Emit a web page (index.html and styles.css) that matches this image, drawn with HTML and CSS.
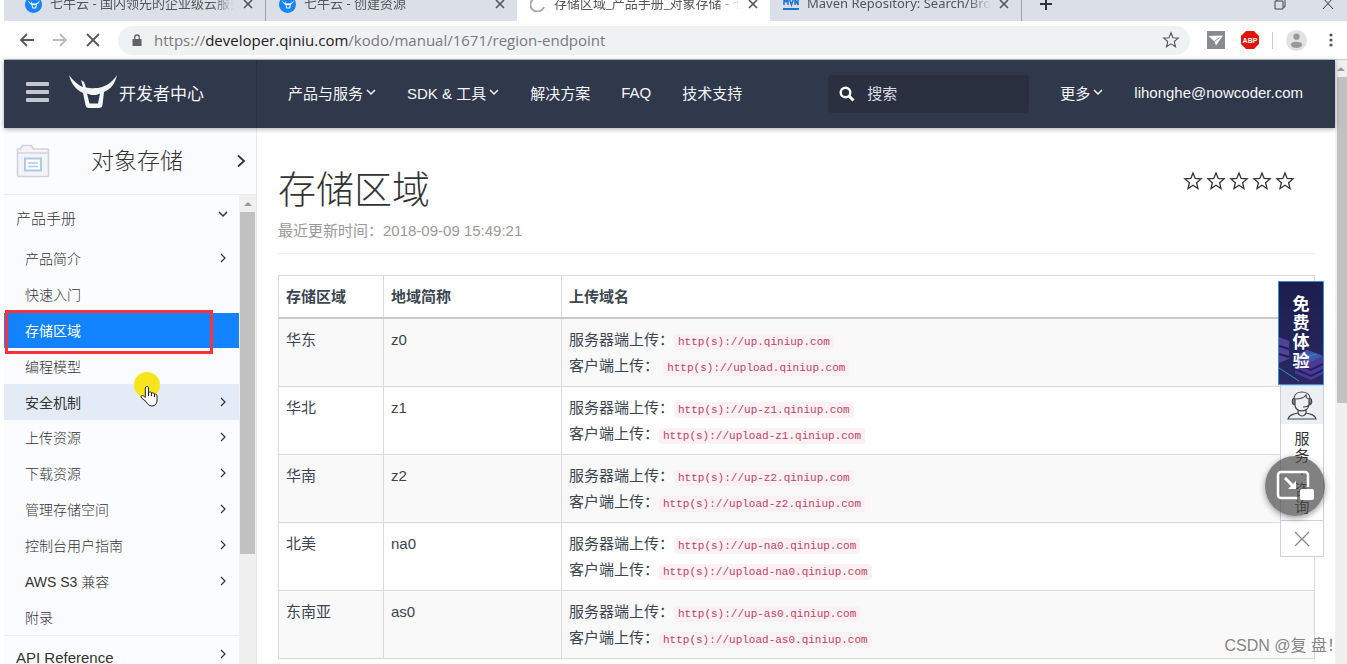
FILE: index.html
```html
<!DOCTYPE html>
<html lang="zh-CN">
<head>
<meta charset="utf-8">
<title>存储区域_产品手册_对象存储 - 七牛开发者中心</title>
<link rel="stylesheet" href="styles.css">
</head>
<body>
<svg class="defs" aria-hidden="true">
  <symbol id="bull" viewBox="0 0 48 34"><path fill="currentColor" fill-rule="evenodd" d="M0 0C5 7 11 11 14 12L12 5L15 7L17 12.500C21 13.500 29 13.500 33 12C40 9.500 44 6 48 0C46 9 42 14 35 17L33.500 30Q33 33 30 33H20Q17 33 16.500 30L14 18C6 14 2 8 0 0ZM18 18.500L20.500 28.500H29L31 18.500L28.500 19.500Q27.500 20 25 20Q22 20 21 19.500Z"/></symbol>
  <symbol id="down" viewBox="0 0 10 10"><path d="M1 3l4 4 4-4" fill="none" stroke="currentColor" stroke-width="1.500"/></symbol>
  <symbol id="right" viewBox="0 0 10 10"><path d="M3 1l4 4-4 4" fill="none" stroke="currentColor" stroke-width="1.200"/></symbol>
  <symbol id="close" viewBox="0 0 10 10"><path d="M1 1l8 8M9 1L1 9" fill="none" stroke="currentColor" stroke-width="1.600"/></symbol>
  <symbol id="star" viewBox="0 0 20 20"><path d="M10 2l2.200 5.500 5.900.4-4.500 3.800 1.400 5.800L10 14.300 5 17.500l1.400-5.800L1.900 7.900l5.900-.4z" fill="none" stroke="currentColor" stroke-width="1.300"/></symbol>
</svg>

<div class="tabs">
  <div class="tab">
    <span class="favicon"><svg><use href="#bull"/></svg></span>
    <span class="tab-title">七牛云 - 国内领先的企业级云服务</span>
    <button class="tab-close" aria-label="关闭标签页"><svg><use href="#close"/></svg></button>
  </div>
  <div class="tab divided">
    <span class="favicon"><svg><use href="#bull"/></svg></span>
    <span class="tab-title">七牛云 - 创建资源</span>
    <button class="tab-close" aria-label="关闭标签页"><svg><use href="#close"/></svg></button>
  </div>
  <div class="tab active-tab">
    <svg class="spinner" viewBox="0 0 16 16"><path d="M5 2a7 7 0 1 0 9 9" fill="none" stroke="#aaa" stroke-width="2"/></svg>
    <span class="tab-title">存储区域_产品手册_对象存储 - 七</span>
    <button class="tab-close" aria-label="关闭标签页"><svg><use href="#close"/></svg></button>
  </div>
  <div class="tab last-tab">
    <svg class="mvn" viewBox="0 0 16 16"><path d="M1 9V3l2 3 2-3v6M6.500 3l2 6 2-6M12 9V3l3 6V3" fill="none" stroke="#1b74d8" stroke-width="1.500"/><path fill="#1b74d8" d="M0 12h16v2H0z"/></svg>
    <span class="tab-title">Maven Repository: Search/Bro</span>
    <button class="tab-close" aria-label="关闭标签页"><svg><use href="#close"/></svg></button>
  </div>
  <button class="new-tab" aria-label="新建标签页"><svg viewBox="0 0 14 14"><path d="M7 1v12M1 7h12" stroke="#333" stroke-width="2"/></svg></button>
  <div class="window-buttons">
    <button aria-label="还原"><svg viewBox="0 0 12 12"><path d="M1 3h8v8H1zM3 3V1h8v8H9" fill="none" stroke="#444"/></svg></button>
    <button aria-label="关闭"><svg viewBox="0 0 12 12"><path d="M1 0l10 11M11 0L1 11" fill="none" stroke="#333"/></svg></button>
  </div>
</div>

<div class="toolbar">
  <button aria-label="后退"><svg viewBox="0 0 16 16"><path d="M15 8H2M8 2L2 8l6 6" fill="none" stroke="#55585c" stroke-width="1.800"/></svg></button>
  <button aria-label="前进"><svg viewBox="0 0 16 16"><path d="M1 8h13M8 2l6 6-6 6" fill="none" stroke="#b9bbbe" stroke-width="1.800"/></svg></button>
  <button aria-label="停止"><svg viewBox="0 0 16 16"><path d="M2 2l12 12M14 2L2 14" fill="none" stroke="#55585c" stroke-width="1.800"/></svg></button>
  <div class="address">
    <svg class="lock" viewBox="0 0 10 12"><path d="M.5 5h9v7h-9z" fill="#5f6368"/><path d="M2.700 5V3.300a2.300 2.300 0 0 1 4.600 0V5" fill="none" stroke="#5f6368" stroke-width="1.300"/></svg>
    <span class="url">https://<b>developer.qiniu.com</b>/kodo/manual/1671/region-endpoint</span>
    <button aria-label="收藏"><svg><use href="#star"/></svg></button>
  </div>
  <div class="extensions">
    <svg class="ext" viewBox="0 0 18 18"><path fill="#858b8f" d="M0 0h18v18H0z"/><path fill="#fff" d="M1.500 5l14.500-.5-7 10-1.500-4z"/><path stroke="#858b8f" d="M7.500 10.500l5-4"/></svg>
    <svg class="ext" viewBox="0 0 18 18"><path fill="#e01405" d="M5 0h8l5 5v8l-5 5H5l-5-5V5z"/><text x="9" y="12" text-anchor="middle" class="abp">ABP</text></svg>
    <span class="ext-divider"></span>
    <svg class="person" viewBox="0 0 22 22"><circle cx="11" cy="11" r="11" fill="#e2e2e2"/><circle cx="11" cy="7" r="3.300" fill="#9a9a9a"/><ellipse cx="11" cy="15.500" rx="6" ry="3.300" fill="#9a9a9a"/></svg>
    <button class="dots" aria-label="菜单"><svg viewBox="0 0 4 16"><g fill="#555"><circle cx="2" cy="3" r="1.600"/><circle cx="2" cy="8" r="1.600"/><circle cx="2" cy="13" r="1.600"/></g></svg></button>
  </div>
</div>

<div class="viewport">
  <div class="page">
    <header class="site-header">
      <div class="brand">
        <button class="burger" aria-label="菜单"><span></span><span></span><span></span></button>
        <a href="#" class="logo"><svg><use href="#bull"/></svg>开发者中心</a>
      </div>
      <nav class="main-nav">
        <a href="#">产品与服务<svg><use href="#down"/></svg></a>
        <a href="#">SDK &amp; 工具<svg><use href="#down"/></svg></a>
        <a href="#">解决方案</a>
        <a href="#">FAQ</a>
        <a href="#">技术支持</a>
      </nav>
      <label class="search">
        <svg viewBox="0 0 16 16"><circle cx="6.500" cy="6.500" r="4.800" fill="none" stroke="#fff" stroke-width="2.400"/><path d="M10 10l4.500 4.500" stroke="#fff" stroke-width="3"/></svg>
        <input type="text" placeholder="搜索" aria-label="搜索">
      </label>
      <nav class="main-nav account">
        <a href="#">更多<svg><use href="#down"/></svg></a>
        <a href="#">lihonghe@nowcoder.com</a>
      </nav>
    </header>

    <div class="columns">
      <aside class="sidebar">
        <a href="#" class="product">
          <svg class="folder" viewBox="0 0 34 34"><path d="M1.500 8V5h3l2-3.500h9l2 3.500h14a1 1 0 0 1 1 1v25a1.500 1.500 0 0 1-1.500 1.500H3A1.500 1.500 0 0 1 1.500 31zM1.500 9h31" fill="#f4f4f8" stroke="#d2d2da" stroke-width="1.600"/><path d="M9 14.500h16v12H9z" fill="#fff" stroke="#adc9e6" stroke-width="2"/><path d="M12 19h10M12 22.500h10" stroke="#adc9e6" stroke-width="1.600"/></svg>
          <span class="product-name">对象存储</span>
          <svg class="product-arrow" viewBox="0 0 10 14"><path d="M2 1.500L8 7l-6 5.500" fill="none" stroke="#333" stroke-width="1.800"/></svg>
        </a>
        <div class="menu-row">
          <nav class="menu">
            <a href="#" class="group">产品手册<svg><use href="#down"/></svg></a>
            <div class="items">
              <a href="#">产品简介<svg><use href="#right"/></svg></a>
              <a href="#">快速入门</a>
              <a href="#" class="current">存储区域<span class="highlight"></span></a>
              <a href="#">编程模型</a>
              <a href="#" class="hovered">安全机制<svg><use href="#right"/></svg>
                <span class="pointer"><svg viewBox="0 0 28 36"><circle cx="13" cy="13" r="13" fill="#f7e51b"/><path d="M12.500 14.500c1.300-.4 2 .3 2 1.500v5l1-1c1.500-.2 2 .3 2.300 1 1.500-.4 2.300.1 2.600 1 1.600-.2 2.600.5 2.600 2v5c0 2.500-2 5-5 5s-4.500-2-6-4.500L7.500 26c-1-1.500-.3-2.500.8-2.500 1 0 2 1 3 2V16c0-.8.500-1.300 1.200-1.500z" fill="#fff" stroke="#222"/><path d="M14.500 20v4M17.500 21v3M20.500 22v3" stroke="#222"/></svg></span></a>
              <a href="#">上传资源<svg><use href="#right"/></svg></a>
              <a href="#">下载资源<svg><use href="#right"/></svg></a>
              <a href="#">管理存储空间<svg><use href="#right"/></svg></a>
              <a href="#">控制台用户指南<svg><use href="#right"/></svg></a>
              <a href="#">AWS S3 兼容<svg><use href="#right"/></svg></a>
              <a href="#">附录</a>
            </div>
            <a href="#" class="group ruled">API Reference<svg><use href="#right"/></svg></a>
          </nav>
          <div class="scrollbar"><span class="scroll-up"></span><span class="thumb side-thumb"></span></div>
        </div>
      </aside>

      <main class="content">
        <div class="title-row">
          <div>
            <h1>存储区域</h1>
            <p class="updated">最近更新时间：2018-09-09 15:49:21</p>
          </div>
          <div class="stars">
            <button aria-label="1 星"><svg><use href="#star"/></svg></button>
            <button aria-label="2 星"><svg><use href="#star"/></svg></button>
            <button aria-label="3 星"><svg><use href="#star"/></svg></button>
            <button aria-label="4 星"><svg><use href="#star"/></svg></button>
            <button aria-label="5 星"><svg><use href="#star"/></svg></button>
          </div>
        </div>
        <table class="regions">
          <thead><tr><th class="col-region">存储区域</th><th class="col-code">地域简称</th><th>上传域名</th></tr></thead>
          <tbody>
            <tr><td>华东</td><td>z0</td><td>服务器端上传：<code>http(s)://up.qiniup.com</code><br>客户端上传：&nbsp;<code>http(s)://upload.qiniup.com</code></td></tr>
            <tr><td>华北</td><td>z1</td><td>服务器端上传：<code>http(s)://up-z1.qiniup.com</code><br>客户端上传：<code>http(s)://upload-z1.qiniup.com</code></td></tr>
            <tr><td>华南</td><td>z2</td><td>服务器端上传：<code>http(s)://up-z2.qiniup.com</code><br>客户端上传：<code>http(s)://upload-z2.qiniup.com</code></td></tr>
            <tr><td>北美</td><td>na0</td><td>服务器端上传：<code>http(s)://up-na0.qiniup.com</code><br>客户端上传：<code>http(s)://upload-na0.qiniup.com</code></td></tr>
            <tr><td>东南亚</td><td>as0</td><td>服务器端上传：<code>http(s)://up-as0.qiniup.com</code><br>客户端上传：<code>http(s)://upload-as0.qiniup.com</code></td></tr>
          </tbody>
        </table>
      </main>
    </div>

    <div class="float">
      <a href="#" class="trial">
        <svg class="trial-art" viewBox="0 0 44 102" preserveAspectRatio="xMidYMax slice"><path d="M0 55l10 4v18L0 81z" fill="#514398"/><path d="M0 64l10 3M0 72l10 3" stroke="#211d58" stroke-width="2"/><path d="M16 74l12-6 16 6v18l-12 6-16-7z" fill="#4a3c96"/><path d="M16 74l16 6 12-6-16-6z" fill="#3f58a8"/><path d="M16 81l16 7 12-6M16 87l16 7 12-6" fill="none" stroke="#241f62" stroke-width="2"/><path d="M0 86l20 13M26 75l12-3" stroke="#2f90b8"/></svg>
        <span>免费体验</span>
      </a>
      <div class="service">
        <svg class="agent" viewBox="0 0 30 30"><g fill="none" stroke="#444" stroke-width="1.200"><path d="M8 15C4 14 5 9 7 8 8 0 22 0 23 8c2 1 3 6-1 7M8 15V9c5 0 9-1 11-4 0 3 2 4 3 4v5c0 9-14 9-14 1zM22 14c0 3-3 3-6 3M11 20v3c-5 1-9 2-10 6h28c-1-4-5-5-10-6v-3M11 23c2 4 6 4 8 0"/><path d="M7 8v7M23 8v7"/></g></svg>
        <a href="#" class="service-text">服务<span>·</span>咨询</a>
        <button aria-label="关闭"><svg viewBox="0 0 16 16"><path d="M1 1l14 14M15 1L1 15" stroke="#888" stroke-width="1.200"/></svg></button>
      </div>
      <button class="pip" aria-label="画中画"><svg viewBox="0 0 38 32"><path d="M21 28H5a3 3 0 0 1-3-3V5a3 3 0 0 1 3-3h24a3 3 0 0 1 3 3v12" fill="none" stroke="#fff" stroke-width="2.500"/><path d="M9 8l9 9" stroke="#fff" stroke-width="3"/><path d="M20 11v8h-8z" fill="#fff"/><rect x="24" y="19" width="14" height="11" rx="2" fill="#fff"/></svg></button>
    </div>
  </div>
  <div class="scrollbar window-scroll"><span class="scroll-up"></span><span class="thumb main-thumb"></span></div>
</div>
<div class="watermark">CSDN @复 盘！</div>
</body>
</html>
```
FILE: styles.css
```css
* { box-sizing: border-box; }
body {
  margin: 0;
  padding-left: 4px;
  height: 100vh;
  display: flex;
  flex-direction: column;
  overflow: hidden;
  position: relative;
  background: #fff;
  color: #333;
  font: 15px "Liberation Sans", "Noto Sans CJK SC", sans-serif;
}
a { color: inherit; text-decoration: none; }
button { padding: 0; border: 0; background: none; color: inherit; font: inherit; display: grid; place-items: center; }
svg { display: block; flex: none; }
.defs { position: absolute; width: 0; height: 0; }

/* Browser tabs */
.tabs {
  height: 21px;
  flex: none;
  display: flex;
  align-items: flex-end;
  overflow: hidden;
  background: #dbdfe8;
  font: 13px "Noto Sans", "Noto Sans CJK SC", sans-serif;
  color: #555;
}
.tab {
  width: 252px;
  height: 34px;
  padding: 0 12px 0 13px;
  display: flex;
  align-items: center;
  gap: 8px;
}
.tab:first-child { width: 262px; padding-left: 21px; border-right: 1px solid #9da1aa; }
.divided { width: 251px; border-bottom-right-radius: 8px; }
.active-tab { width: 253px; background: #fff; }
.last-tab { border-right: 1px solid #9da1aa; }
.tab-title {
  flex: 1;
  overflow: hidden;
  white-space: nowrap;
  line-height: 20px;
  padding-bottom: 2px;
  mask-image: linear-gradient(to right, #000 88%, transparent);
}
.tab-close svg { width: 10px; height: 10px; }
.favicon {
  width: 17px;
  height: 17px;
  border-radius: 50%;
  background: #1684fc;
  color: #fff;
  display: grid;
  place-items: center;
}
.favicon svg { width: 12px; height: 9px; }
.spinner { width: 16px; height: 16px; }
.mvn { width: 16px; height: 16px; }
.new-tab { height: 34px; width: 48px; }
.new-tab svg { width: 14px; height: 14px; }
.window-buttons { height: 34px; margin-left: auto; padding-right: 13px; display: flex; align-items: center; gap: 36px; }
.window-buttons svg { width: 12px; height: 12px; }

/* Address bar */
.toolbar { height: 38px; flex: none; display: flex; align-items: center; padding: 0 11px 0 15px; gap: 17px; }
.toolbar > button svg { width: 16px; height: 16px; }
.address {
  flex: 1;
  height: 29px;
  border-radius: 15px;
  background: #f0f1f3;
  display: flex;
  align-items: center;
  padding: 0 10px 0 14px;
  gap: 12px;
}
.lock { width: 10px; height: 12px; }
.url { flex: 1; font: 15px "Open Sans", "Noto Sans", sans-serif; color: #777b80; }
.url b { font-weight: 400; color: #222; }
.address svg:not(.lock) { width: 18px; height: 18px; color: #55585c; }
.extensions { display: flex; align-items: center; gap: 13px; }
.ext { width: 18px; height: 18px; }
.ext + .ext { margin-left: 3px; }
.abp { font: bold 7px "Liberation Sans", sans-serif; fill: #fff; }
.ext-divider { width: 1px; height: 17px; background: #ccc; }
.person { width: 21px; height: 21px; }
.dots { width: 16px; justify-items: end; padding-right: 3px; }
.dots svg { width: 4px; height: 16px; }

/* Page frame */
.viewport { flex: 1; min-height: 0; display: flex; border-top: 1px solid #c5c7cb; }
.page { flex: 1; min-width: 0; display: flex; flex-direction: column; position: relative; }
.scrollbar { background: #f0f0f0; display: flex; flex-direction: column; align-items: center; }
.window-scroll { width: 12px; }
.scroll-up { height: 17px; display: grid; place-items: center; }
.scroll-up::before { content: ""; border: 4px solid transparent; border-top: 0; border-bottom: 4px solid #999; }
.thumb { background: #c1c1c1; align-self: stretch; }
.main-thumb { height: 54%; margin-left: 2px; }
.side-thumb { height: 342px; margin: 0 1px; }

.site-header {
  height: 68px;
  flex: none;
  display: flex;
  align-items: center;
  background: #30384b;
  color: #f4f5f7;
  padding-right: 32px;
  box-shadow: 0 1px 5px rgba(0, 0, 0, .35);
  position: relative;
}
.brand { width: 253px; height: 100%; padding: 0 0 4px 22px; display: flex; align-items: center; gap: 20px; border-right: 1px solid #292f40; }
.burger { width: 23px; height: 20px; align-content: space-between; }
.burger span { width: 23px; height: 4px; border-radius: 1px; background: #c4c7ce; }
.logo { display: flex; align-items: center; gap: 2px; font-size: 17px; }
.logo svg { width: 48px; height: 34px; }
.main-nav { display: flex; gap: 31px; margin-left: 31px; padding-bottom: 4px; white-space: nowrap; }
.main-nav a { display: flex; align-items: center; gap: 3px; }
.main-nav svg { width: 10px; height: 10px; }
.search {
  width: 201px;
  height: 38px;
  margin-left: auto;
  padding: 0 11px;
  display: flex;
  align-items: center;
  gap: 12px;
  background: #2b3041;
  border-radius: 4px;
}
.search svg { width: 16px; height: 16px; }
.search input { flex: 1; min-width: 0; padding: 0 0 2px; border: 0; background: none; color: #fff; font: inherit; }
.search input::placeholder { color: #d9dce2; }
.columns { flex: 1; min-height: 0; display: flex; }

/* Sidebar */
.sidebar { width: 253px; flex: none; display: flex; flex-direction: column; background: #fbfcff; border-right: 1px solid #ececf0; }
.product {
  height: 67px;
  flex: none;
  display: flex;
  align-items: center;
  padding: 0 10px 0 12px;
  border-bottom: 1px solid #ececf0;
  font-size: 23px;
  font-weight: 300;
}
.product-name { margin-left: 41px; padding-bottom: 4px; }
.folder { width: 34px; height: 34px; }
.product-arrow { width: 10px; height: 14px; margin-left: auto; }
.menu-row { flex: 1; min-height: 0; display: flex; }
.menu-row .scrollbar { width: 17px; }
.menu { flex: 1; overflow: hidden; }
.menu svg { width: 10px; height: 10px; }
.group { height: 46px; padding: 0 11px 2px 12px; display: flex; align-items: center; justify-content: space-between; font-weight: 300; }
.group svg { margin-bottom: 7px; }
.ruled { border-top: 1px solid #ececf0; }
.items { height: 394px; display: grid; grid-auto-rows: 1fr; font-size: 14px; font-weight: 300; }
.items a { padding: 0 11px 1px 21px; display: flex; align-items: center; justify-content: space-between; position: relative; }
.items .current { background: #1283ff; color: #fff; font-weight: 400; }
.items .hovered { background: #e2ebf6; font-weight: 400; }
.highlight { position: absolute; left: 1px; top: -3px; width: 208px; height: 44px; border: 3px solid #fb3237; }
.pointer { position: absolute; left: 130px; top: -12px; }
.pointer svg { width: 28px; height: 36px; }

/* Article */
.content { flex: 1; min-width: 0; padding: 35px 20px 0 21px; overflow: hidden; }
.title-row { display: flex; justify-content: space-between; padding-bottom: 9px; border-bottom: 1px solid #eee; margin-bottom: 21px; }
h1 { margin: 0; font-size: 38px; line-height: 54px; font-weight: 300; }
.updated { margin: 0; padding-top: 1px; line-height: 26px; color: #999; }
.stars { display: flex; align-items: flex-start; gap: 3px; padding: 8px 20px 0 0; }
.stars svg { width: 20px; height: 20px; }
.regions { width: 100%; border-collapse: collapse; color: #3a4550; line-height: 26px; }
.regions th, .regions td { border: 1px solid #d9d9d9; padding: 8px 8px 7px 7px; text-align: left; vertical-align: top; }
.regions th { border-bottom: 2px solid #c9c9c9; }
.regions tbody tr:nth-child(odd) { background: #f9f9f9; }
.regions .col-region { width: 105px; }
.regions .col-code { width: 178px; }
code { padding: 2px 4px; border-radius: 4px; background: #fbf0f4; color: #bd4460; font: 11px "Liberation Mono", monospace; }

/* Floating service panel */
.float { position: absolute; right: 11px; top: 221px; display: flex; flex-direction: column; align-items: flex-end; }
.trial {
  width: 46px;
  height: 104px;
  position: relative;
  display: grid;
  place-items: center;
  background: linear-gradient(#1b1e4d, #2b2864);
  border: 1px solid #3b8fd8;
  color: #fff;
  font-weight: 700;
  font-size: 17px;
  line-height: 19px;
}
.trial-art { position: absolute; inset: 0; width: 100%; height: 100%; }
.trial span { width: 17px; position: relative; }
.service { width: 44px; background: #fff; border: 1px solid #ccd0da; display: grid; justify-items: center; }
.agent { width: 100%; height: 38px; padding: 4px 6px; background: #edf0f3; }
.service-text { width: 16px; height: 96px; padding-top: 6px; line-height: 17px; text-align: center; }
.service-text span { display: block; }
.service button { width: 100%; height: 36px; border-top: 1px solid #ccd0da; }
.service button svg { width: 16px; height: 16px; }
.pip {
  position: absolute;
  right: -1px;
  top: 175px;
  width: 60px;
  height: 60px;
  border-radius: 50%;
  background: rgba(75, 75, 75, .7);
  box-shadow: 0 2px 6px rgba(0, 0, 0, .4);
}
.pip svg { width: 38px; height: 32px; }
.watermark { position: absolute; right: 4px; bottom: 6px; font-size: 16px; line-height: 24px; color: #858585; }
```
